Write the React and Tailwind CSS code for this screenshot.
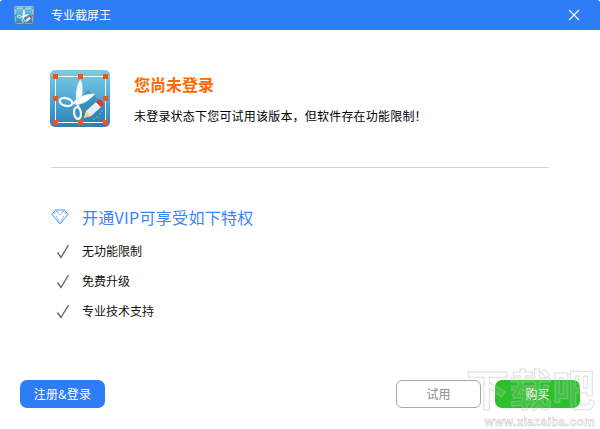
import React from "react";

const cjk = "font-['Microsoft_YaHei','Noto_Sans_CJK_SC','Liberation_Sans',sans-serif]";

// logo: scissors + pencil inside a crop frame
function CropLogo({ size, id }) {
  const handles = [[5, 6], [30, 6], [55, 6], [5, 28], [55, 28], [5, 52], [30, 52], [55, 52]];
  return (
    <svg width={size} height={size * 57 / 60} viewBox="0 0 60 57">
      <defs>
        <linearGradient id={id} x1="0" y1="0" x2="0" y2="1">
          <stop offset="0" stopColor="#7ccde8" />
          <stop offset="0.55" stopColor="#4aa5cf" />
          <stop offset="1" stopColor="#2f80b4" />
        </linearGradient>
      </defs>
      <rect width="60" height="57" rx="5" fill={`url(#${id})`} />
      <path d="M24 38 L42 55 L55 55 L55 36 L38 20 Z" fill="#2a78a8" opacity="0.45" />
      <rect x="5.5" y="6.5" width="50" height="46" fill="none" stroke="#fff" strokeWidth="1" />
      <ellipse cx="16" cy="32" rx="6.5" ry="3.8" transform="rotate(15 16 32)" fill="none" stroke="#f4f9fb" strokeWidth="2.2" />
      <ellipse cx="27.5" cy="43" rx="3.4" ry="6" transform="rotate(-8 27.5 43)" fill="none" stroke="#f4f9fb" strokeWidth="2.2" />
      <path d="M22 33 L28 33 M28 31 L28 38" stroke="#f4f9fb" strokeWidth="2.4" />
      <path d="M30.5 9 C26 15 25 24 26.5 34 L30 34 C33 25 34 15 30.5 9 Z" fill="#f4f9fb" stroke="#8fbcd2" strokeWidth="0.4" />
      <path d="M45 24 C37 23 31 26 24 31 L26 35 C34 34 40 30 45 24 Z" fill="#fafdfe" stroke="#8fbcd2" strokeWidth="0.4" />
      <path d="M34 48 L36 41 L46 32 L51 37 L41 46 Z" fill="#e9eef2" />
      <path d="M34 48 L36 41 L41 46 Z" fill="#f3cf94" />
      <path d="M46 32 L48.5 29.5 Q50 29 52 31 Q54 33 53.5 34.5 L51 37 Z" fill="#d8343a" />
      <g fill="#cfe8f3">
        <circle cx="52" cy="41" r="0.6" />
        <circle cx="50" cy="44" r="0.6" />
        <circle cx="47" cy="47" r="0.6" />
        <circle cx="44" cy="49" r="0.6" />
      </g>
      {handles.map(([x, y], i) => (
        <rect key={i} x={x - 2} y={y - 2} width="5" height="5" fill="#e2572b" />
      ))}
    </svg>
  );
}

function Check() {
  return (
    <svg width="14" height="15" viewBox="0 0 14 15" fill="none">
      <path d="M1.5 8.5 L5 13.5 L12.5 1" stroke="#666" strokeWidth="1.4" />
    </svg>
  );
}

function Diamond() {
  return (
    <svg width="18" height="16" viewBox="0 0 18 16" fill="none" stroke="#4f94f7" strokeWidth="1">
      <path d="M4.5 1 H13.5 L17 5.5 L9 15 L1 5.5 Z" />
      <path d="M1 5.5 Q5 4 6 2 Q7 5 9 6 Q11 5 12 2 Q13 4 17 5.5 M5 6.5 L9 15 L13 6.5" stroke="#8dbbfa" />
    </svg>
  );
}

export default function App() {
  const perks = ["无功能限制", "免费升级", "专业技术支持"];

  return (
    <div className={`relative w-[600px] h-[429px] bg-white flex flex-col overflow-hidden ${cjk}`}>

      {/* title bar */}
      <div className="h-[30px] bg-[#2e7cf6] rounded-t-[3px] flex items-center pl-[14px] pr-[20px] shrink-0">
        <CropLogo size={20} id="logoSmall" />
        <span className="ml-[17px] text-[12px] text-white">专业截屏王</span>
        <svg className="ml-auto" width="12" height="12" viewBox="0 0 12 12" stroke="#fff" strokeWidth="1.1">
          <path d="M1 1 L11 11 M11 1 L1 11" />
        </svg>
      </div>

      {/* login notice */}
      <div className="flex mt-[40px] ml-[50px]">
        <CropLogo size={60} id="logoBig" />
        <div className="ml-[25px] flex flex-col -translate-x-px">
          <div className="text-[16px] leading-[22px] mt-[3px] font-bold text-[#ff6a00]">您尚未登录</div>
          <div className="text-[12px] leading-[16px] mt-[13px] text-black tracking-[0.2px]">未登录状态下您可试用该版本，但软件存在功能限制！</div>
        </div>
      </div>

      <div className="h-px bg-[#cfcfcf] mx-[51px] mt-[40px]" />

      {/* vip perks */}
      <div className="flex items-center ml-[51px] mt-[38px] h-[22px]">
        <Diamond />
        <span className="ml-[13px] text-[16px] text-[#3a85f5] tracking-[0.3px]">开通VIP可享受如下特权</span>
      </div>
      <div className="flex flex-col gap-[14px] ml-[56px] mt-[15px]">
        {perks.map((perk) => (
          <div key={perk} className="flex items-center h-[16px]">
            <Check />
            <span className="ml-[12px] text-[12px] text-[#111]">{perk}</span>
          </div>
        ))}
      </div>

      {/* buttons */}
      <div className="mt-auto mb-[21px] mx-[20px] flex text-[12px]">
        <button className="w-[85px] h-[28px] rounded-[7px] bg-[#2e7cf6] text-white tracking-[0.3px]">注册&amp;登录</button>
        <button className="ml-auto w-[85px] h-[28px] rounded-[6px] border border-[#a8a8a8] text-[#8a8a8a]">试用</button>
        <button className="ml-[14px] w-[85px] h-[28px] rounded-[7px] bg-[#2cc02c] text-white">购买</button>
      </div>

      {/* watermark */}
      <div className="absolute right-[5px] bottom-[1px] flex flex-col items-end pointer-events-none">
        <span className="text-[43px] leading-[46px] mb-[6px] font-bold text-white/10 [-webkit-text-stroke:1px_rgba(190,190,190,0.5)]">下载吧</span>
        <span className="text-[12px] leading-[12px] font-bold tracking-[0.3px] text-white/20 [-webkit-text-stroke:0.5px_rgba(170,170,170,0.7)] font-['Liberation_Sans',sans-serif]">www.xiazaiba.com</span>
      </div>
    </div>
  );
}
